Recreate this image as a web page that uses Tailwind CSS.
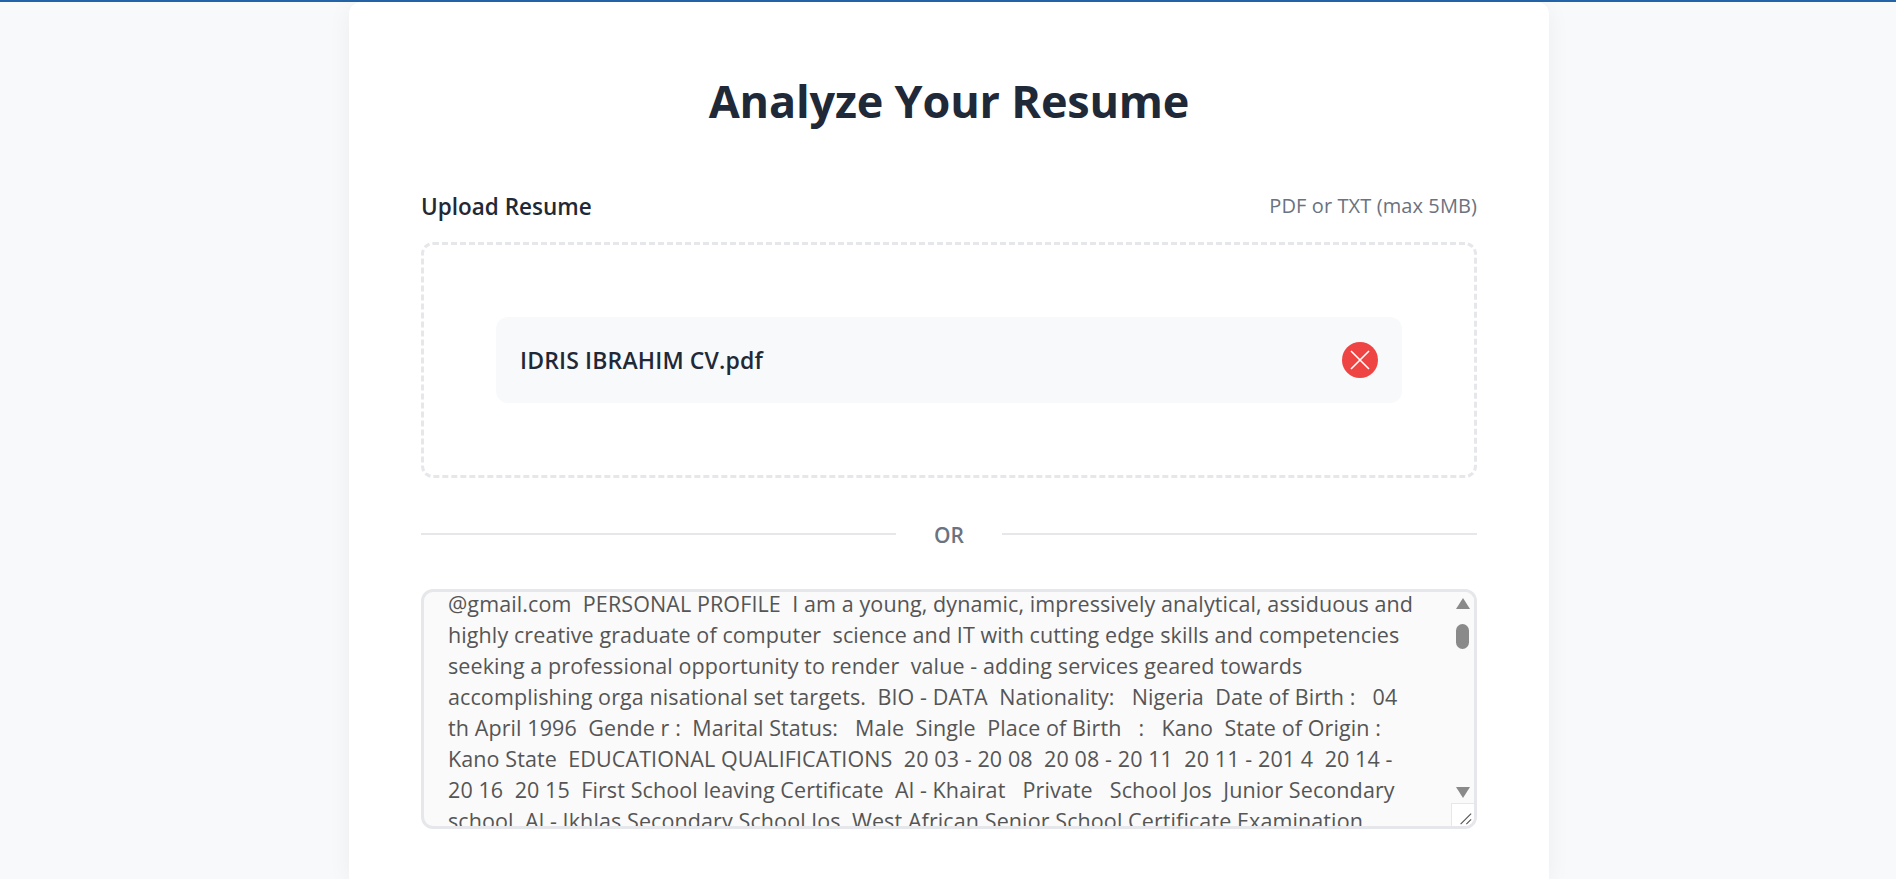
<!DOCTYPE html>
<html lang="en">
<head>
    <meta charset="UTF-8">
    <meta name="viewport" content="width=device-width, initial-scale=1.0">
    <title>Analyze Your Resume</title>
    <script src="https://cdn.jsdelivr.net/npm/@tailwindcss/browser@4"></script>
</head>
<body class="h-[879px] overflow-hidden bg-[#f8f9fb] font-['Open_Sans',sans-serif] text-[#1f2937]">
    <div class="h-[2px] bg-[#2563a8]"></div>

    <main class="ml-[349px] w-[1200px] h-[877px] overflow-hidden bg-white rounded-t-xl shadow-[0_4px_24px_rgba(0,0,0,0.05)] px-[72px] pt-[69px]">
        <h1 class="text-center text-[45px] leading-[60px] font-bold tracking-[-0.18px]">Analyze Your Resume</h1>

        <!-- Upload -->
        <div class="mt-[58px] flex items-center justify-between h-[36px]">
            <label class="text-[22.5px] font-semibold">Upload Resume</label>
            <span class="text-[20px] text-[#6b7280] tracking-[0.1px] pb-[2px]">PDF or TXT (max 5MB)</span>
        </div>
        <div class="mt-[17px] h-[236px] border-[3px] border-dashed border-[#e5e7eb] rounded-xl flex items-center justify-center px-[72px]">
            <div class="w-full h-[86px] bg-[#f8f9fb] rounded-xl flex items-center justify-between px-6">
                <span class="text-[23px] font-semibold tracking-[0.15px]">IDRIS IBRAHIM CV.pdf</span>
                <button class="w-9 h-9 rounded-full bg-[#ef4444] flex items-center justify-center">
                    <svg class="w-5 h-5" viewBox="0 0 20 20" fill="none" stroke="white" stroke-width="1.6"><path d="M1 1l18 18M19 1L1 19"/></svg>
                </button>
            </div>
        </div>

        <!-- Divider -->
        <div class="mt-[41px] flex items-center h-[30px]">
            <div class="flex-1 h-[2px] bg-[#e5e7eb]"></div>
            <span class="w-[106px] pt-[4px] text-center text-[21px] font-semibold text-[#6b7280]">OR</span>
            <div class="flex-1 h-[2px] bg-[#e5e7eb]"></div>
        </div>

        <!-- Resume text -->
        <div class="relative mt-[40px] h-[240px] border-[3px] border-[#e5e7eb] rounded-xl bg-[#fafafa] overflow-hidden">
            <div class="-mt-[4px] pl-[24px] pr-[24px] whitespace-pre overflow-hidden text-[21.5px] leading-[31px] text-[#555555] tracking-[0.1px]">@gmail.com  PERSONAL PROFILE  I am a young, dynamic, impressively analytical, assiduous and
highly creative graduate of computer  science and IT with cutting edge skills and competencies
seeking a professional opportunity to render  value - adding services geared towards
accomplishing orga nisational set targets.  BIO - DATA  Nationality:   Nigeria  Date of Birth :   04
th April 1996  Gende r :  Marital Status:   Male  Single  Place of Birth   :   Kano  State of Origin :
Kano State  EDUCATIONAL QUALIFICATIONS  20 03 - 20 08  20 08 - 20 11  20 11 - 201 4  20 14 -
20 16  20 15  First School leaving Certificate  Al - Khairat   Private   School Jos  Junior Secondary
school  Al - Ikhlas Secondary School Jos  West African Senior School Certificate Examination</div>

            <!-- scrollbar -->
            <div class="absolute top-0 right-0 bottom-0 w-[23px] bg-[#fafafa] flex flex-col items-center">
                <div class="mt-[6px] w-0 h-0 border-x-[7.5px] border-x-transparent border-b-[11px] border-b-[#8a8a8a]"></div>
                <div class="mt-[15px] w-[13px] h-[25px] rounded-full bg-[#8a8a8a]"></div>
                <div class="mt-auto mb-[28px] w-0 h-0 border-x-[7.5px] border-x-transparent border-t-[11px] border-t-[#8a8a8a]"></div>
            </div>
            <!-- resize grip -->
            <div class="absolute right-0 bottom-0 w-[23px] h-[23px] bg-white border-l border-t border-[#e5e7eb]">
                <svg class="w-full h-full" viewBox="0 0 23 23" fill="none" stroke="#555" stroke-width="1.2"><path d="M9 21L20 10M15 21l5-5"/></svg>
            </div>
        </div>
    </main>
</body>
</html>
